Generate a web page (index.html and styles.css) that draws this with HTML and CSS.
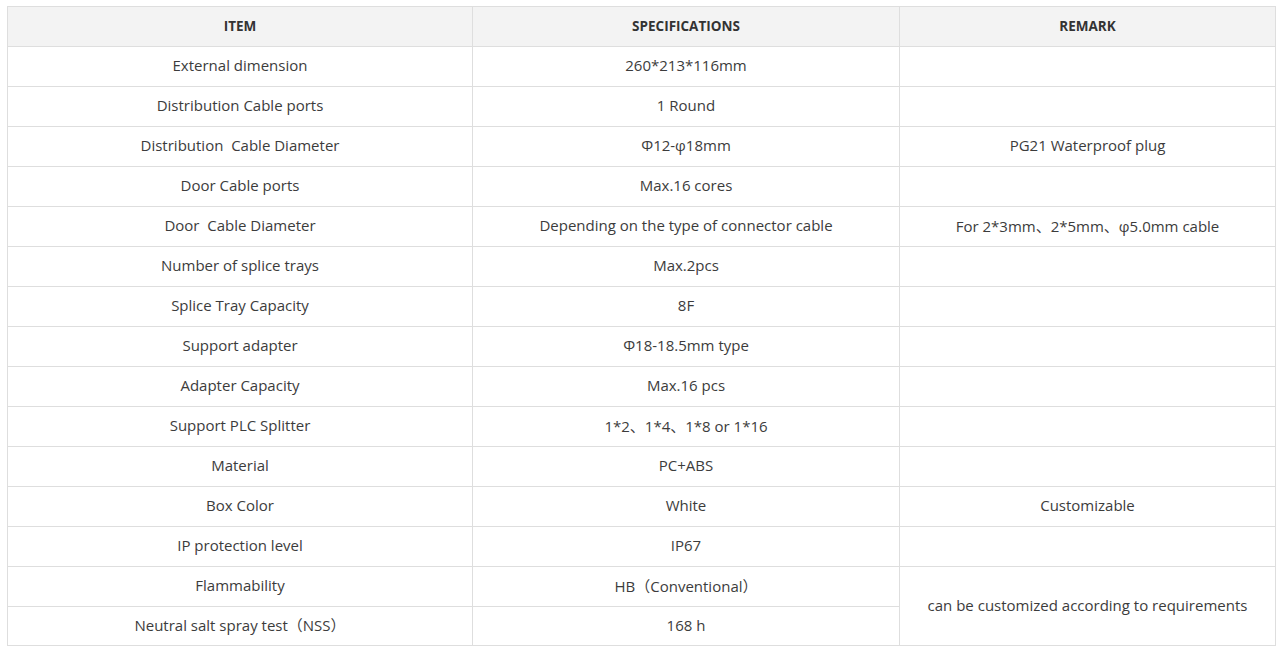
FILE: index.html
```html
<!DOCTYPE html>
<html>
<head>
<meta charset="utf-8">
<link rel="stylesheet" href="styles.css">
</head>
<body>
<div class="wrap">
<table class="spec">
<colgroup><col class="c1"><col class="c2"><col class="c3"></colgroup>
<thead>
<tr><th>ITEM</th><th>SPECIFICATIONS</th><th>REMARK</th></tr>
</thead>
<tbody>
<tr><td>External dimension</td><td>260*213*116mm</td><td></td></tr>
<tr><td>Distribution Cable ports</td><td>1 Round</td><td></td></tr>
<tr><td>Distribution&nbsp; Cable Diameter</td><td>Φ12-φ18mm</td><td>PG21 Waterproof plug</td></tr>
<tr><td>Door Cable ports</td><td>Max.16 cores</td><td></td></tr>
<tr><td>Door&nbsp; Cable Diameter</td><td>Depending on the type of connector cable</td><td>For 2*3mm、2*5mm、φ5.0mm cable</td></tr>
<tr><td>Number of splice trays</td><td>Max.2pcs</td><td></td></tr>
<tr><td>Splice Tray Capacity</td><td>8F</td><td></td></tr>
<tr><td>Support adapter</td><td>Φ18-18.5mm type</td><td></td></tr>
<tr><td>Adapter Capacity</td><td>Max.16 pcs</td><td></td></tr>
<tr><td>Support PLC Splitter</td><td>1*2、1*4、1*8 or 1*16</td><td></td></tr>
<tr><td>Material</td><td>PC+ABS</td><td></td></tr>
<tr><td>Box Color</td><td>White</td><td>Customizable</td></tr>
<tr><td>IP protection level</td><td>IP67</td><td></td></tr>
<tr><td>Flammability</td><td>HB（Conventional）</td><td rowspan="2">can be customized according to requirements</td></tr>
<tr class="last"><td>Neutral salt spray test（NSS）</td><td>168 h</td></tr>
</tbody>
</table>
</div>
</body>
</html>
```
FILE: styles.css
```css
html, body {
  margin: 0;
  padding: 0;
  background: #fff;
}
.wrap {
  padding: 6px 6px 0 7px;
}
.spec {
  border-collapse: collapse;
  table-layout: fixed;
  width: 1268px;
  font-family: "Open Sans", "Noto Sans CJK SC", sans-serif;
  font-size: 15px;
  color: #3c3c3c;
}
.c1 { width: 465px; }
.c2 { width: 427px; }
.c3 { width: 376px; }
.spec th, .spec td {
  border: 1px solid #dedede;
  text-align: center;
  vertical-align: middle;
  height: 40px;
  padding: 0 8px 3px;
  box-sizing: border-box;
}
.spec .last td {
  height: 39px;
}
.spec th {
  background: #f3f3f3;
  font-weight: 700;
  font-size: 13.5px;
  color: #333;
  padding-bottom: 2px;
}
```
